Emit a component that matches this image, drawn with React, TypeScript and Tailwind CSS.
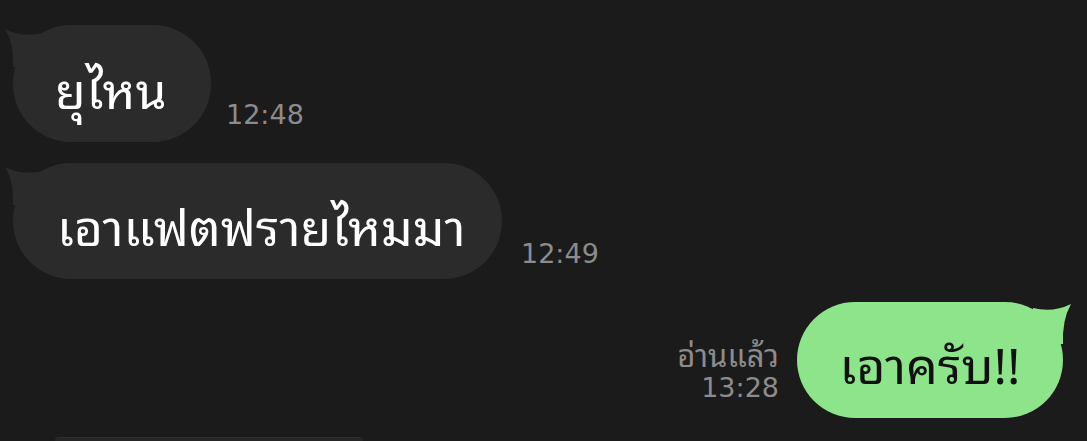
import React from "react";

const thai = { fontFamily: '"Noto Sans Thai Looped", "Noto Sans", "Noto Sans Thai", "Liberation Sans", sans-serif' };
const num = { fontFamily: '"DejaVu Sans", Inter, sans-serif' };

function LeftTail() {
  return (
    <svg className="absolute -left-[10px] top-0" width="50" height="45" viewBox="0 0 50 45">
      <path d="M2 4 Q20 13 40 8 L40 42 L10 42 Q11 18 2 4 Z" fill="#2b2b2b" />
    </svg>
  );
}

function RightTail() {
  return (
    <svg className="absolute -right-[10px] top-0" width="50" height="45" viewBox="0 0 50 45">
      <path d="M48 2 Q30 11 10 6 L10 42 L40 42 Q39 18 48 2 Z" fill="#8ee48b" />
    </svg>
  );
}

export default function App() {
  return (
    <div className="w-[1087px] h-[441px] overflow-hidden bg-[#1b1b1b] flex flex-col pt-[25px]">
      <div className="flex items-end pl-[13px] gap-[15px]">
        <div className="relative">
          <LeftTail />
          <div
            className="relative w-[198px] h-[117px] rounded-[58px] bg-[#2b2b2b] flex items-center pl-[42px] pt-[6px] text-white text-[50px] leading-none"
            style={thai}
          >
            ยุไหน
          </div>
        </div>
        <div className="text-[#8c8c8c] text-[27px] leading-none pb-[14px]" style={num}>
          12:48
        </div>
      </div>

      <div className="flex items-end pl-[13px] gap-[19px] mt-[21px]">
        <div className="relative">
          <LeftTail />
          <div
            className="relative w-[489px] h-[116px] rounded-[58px] bg-[#2b2b2b] flex items-center pl-[44px] pt-[6px] text-white text-[50px] leading-none"
            style={thai}
          >
            เอาแฟตฟรายไหมมา
          </div>
        </div>
        <div className="text-[#8c8c8c] text-[27px] leading-none pb-[12px]" style={num}>
          12:49
        </div>
      </div>

      <div className="flex items-end justify-end pr-[24px] gap-[18px] mt-[23px]">
        <div className="flex flex-col items-end text-[#8c8c8c] pb-[16px]">
          <span className="text-[31px] leading-[30px]" style={thai}>อ่านแล้ว</span>
          <span className="text-[27px] leading-[28px] mt-[6px]" style={num}>13:28</span>
        </div>
        <div className="relative">
          <RightTail />
          <div
            className="relative w-[266px] h-[116px] rounded-[58px] bg-[#8ee48b] flex items-center justify-center pt-[4px] text-[#111] text-[50px] leading-none"
            style={thai}
          >
            เอาครับ!!
          </div>
        </div>
      </div>

      <div className="ml-[55px] mt-[19px] w-[308px] h-[60px] rounded-t-[40px] bg-[#262626] border-t border-[#2e2e2e]" />
    </div>
  );
}
